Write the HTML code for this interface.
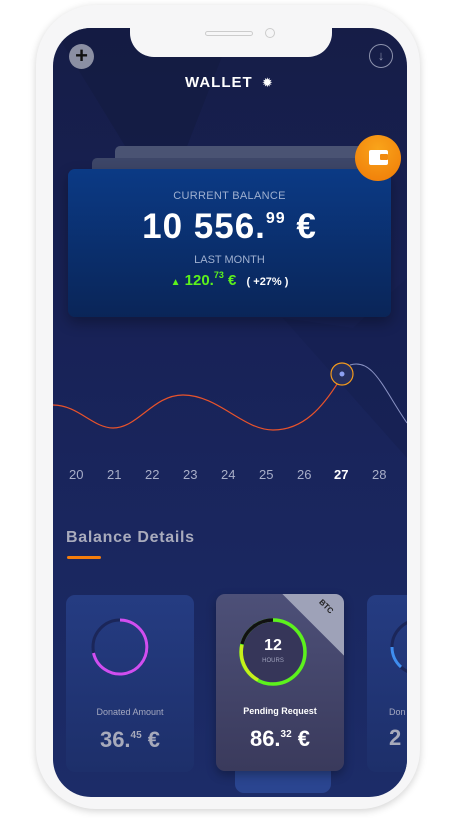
<!DOCTYPE html>
<html><head><meta charset="utf-8"><style>
*{margin:0;padding:0;box-sizing:border-box}
body{width:458px;height:818px;background:#fff;position:relative;overflow:hidden;font-family:"Liberation Sans","DejaVu Sans",sans-serif}
.phone{position:absolute;left:36px;top:5px;width:384px;height:804px;border-radius:60px;background:#f6f6f7;box-shadow:0 2px 8px rgba(0,0,0,.18)}
.screen{position:absolute;left:53px;top:28px;width:354px;height:769px;border-radius:38px;overflow:hidden;background:linear-gradient(180deg,#161d47 0%,#182257 40%,#1c2c68 100%)}
.notch{position:absolute;left:130px;top:20px;width:202px;height:37px;background:#f6f6f7;border-radius:0 0 24px 24px}
.abs{position:absolute}
.w{color:#fff}
</style></head><body>
<div class="phone"></div>
<div class="screen">
<svg class="abs" style="left:0;top:0" width="354" height="769">
<polygon points="0,0 180,0 110,180" fill="#141b42" opacity=".7"/>
<polygon points="230,290 354,430 354,250 300,300" fill="#162050" opacity=".6"/>
<path d="M0,377 C25,377 40,400 60,400 C85,400 100,367 130,367 C165,367 190,402 220,402 C250,402 270,380 289,348" fill="none" stroke="#e8532b" stroke-width="1.2"/>
<path d="M297,337 C320,330 330,360 354,395" fill="none" stroke="#8a93c4" stroke-width="1"/>
<circle cx="289" cy="346" r="11" fill="#262f5e" stroke="#f39a1c" stroke-width="1.2"/>
<circle cx="289" cy="346" r="2.5" fill="#8da0f0"/>
</svg>
<div class="abs" style="left:16px;top:16px;width:25px;height:25px;border-radius:50%;background:#8b8fa3;color:#111;font-size:22px;line-height:24px;text-align:center;font-weight:bold">+</div>
<div class="abs" style="left:316px;top:16px;width:24px;height:24px;border-radius:50%;border:1px solid #8d93ad;color:#8d93ad;font-size:13px;line-height:22px;text-align:center">↓</div>
<div class="abs w" style="left:132px;top:46px;font-size:15px;font-weight:bold;letter-spacing:1px">WALLET <span style="font-size:13px;margin-left:4px">✹</span></div>
<div class="abs" style="left:62px;top:118px;width:250px;height:40px;background:#4a5373;border-radius:5px"></div>
<div class="abs" style="left:39px;top:130px;width:270px;height:40px;background:#3d4668;border-radius:5px"></div>
<div class="abs" style="left:15px;top:141px;width:323px;height:148px;border-radius:7px;background:linear-gradient(180deg,#0b3a85,#0a2558);box-shadow:0 6px 14px rgba(0,0,0,.3);text-align:center">
<div style="margin-top:21px;font-size:11px;color:#9fb0d0;letter-spacing:.3px">CURRENT BALANCE</div>
<div class="w" style="margin-top:5px;font-size:35px;font-weight:bold;letter-spacing:1px">10 556.<sup style="font-size:16px;vertical-align:15px">99</sup> €</div>
<div style="margin-top:7px;font-size:11px;color:#9fb0d0">LAST MONTH</div>
<div style="margin-top:4px;font-size:15px;font-weight:bold;color:#5cf21c"><span style="font-size:10px">▲</span> 120.<sup style="font-size:9px;vertical-align:7px">73</sup> € <span style="color:#fff;font-size:11px;margin-left:6px">( +27% )</span></div>
</div>
<div class="abs" style="left:302px;top:107px;width:46px;height:46px;border-radius:50%;background:radial-gradient(circle at 50% 30%,#f9a41a,#ef7a07)"></div>
<div class="abs" style="left:316px;top:122px;width:19px;height:15px;background:#fff;border-radius:2px"></div>
<div class="abs" style="left:327px;top:126px;width:8px;height:6px;background:#f08a10;border-radius:1px"></div>
<div class="abs" style="left:0;top:439px;width:354px;font-size:13px;color:#a8aec8">
<span class="abs" style="left:16px">20</span><span class="abs" style="left:54px">21</span><span class="abs" style="left:92px">22</span><span class="abs" style="left:130px">23</span><span class="abs" style="left:168px">24</span><span class="abs" style="left:206px">25</span><span class="abs" style="left:244px">26</span><span class="abs" style="left:281px;color:#fff;font-weight:bold">27</span><span class="abs" style="left:319px">28</span></div>
<div class="abs" style="left:13px;top:501px;font-size:16px;font-weight:bold;color:#a9abbc;letter-spacing:.7px">Balance Details</div>
<div class="abs" style="left:14px;top:528px;width:34px;height:3px;background:#f47d0c;border-radius:2px"></div>
<div class="abs" style="left:13px;top:567px;width:128px;height:177px;border-radius:9px;background:linear-gradient(180deg,#253c82,#1d2f6a);text-align:center">
<svg class="abs" style="left:24px;top:22px" width="60" height="60"><circle cx="30" cy="30" r="27" fill="none" stroke="#1b2659" stroke-width="3"/><path d="M30,3 A27,27 0 1 1 3.5,36" fill="none" stroke="#d04ef0" stroke-width="3"/></svg>
<div style="margin-top:112px;font-size:9px;color:#a4a8c0">Donated Amount</div>
<div style="margin-top:10px;font-size:22px;font-weight:bold;color:#a7aabb">36.<sup style="font-size:10px;vertical-align:9px">45</sup> €</div></div>
<div class="abs" style="left:182px;top:735px;width:96px;height:30px;border-radius:9px;background:#2a4590"></div>
<div class="abs" style="left:163px;top:566px;width:128px;height:177px;border-radius:9px;overflow:hidden;background:linear-gradient(180deg,#4d5078,#3a3a5c);text-align:center;box-shadow:0 4px 10px rgba(0,0,0,.3)">
<div class="abs" style="left:85px;top:-45px;width:90px;height:90px;background:#9ea2b8;transform:rotate(45deg)"></div>
<div class="abs" style="left:102px;top:8px;font-size:8px;font-weight:bold;color:#222;transform:rotate(45deg)">BTC</div>
<svg class="abs" style="left:22px;top:23px" width="70" height="70"><circle cx="35" cy="35" r="30" fill="#363659"/><circle cx="35" cy="35" r="32" fill="none" stroke="#5cf21c" stroke-width="3.5"/><path d="M35,3 A32,32 0 0 0 4,27" fill="none" stroke="#111" stroke-width="3.5"/><path d="M4,28 A32,32 0 0 0 20,63" fill="none" stroke="#c6f01a" stroke-width="3.5"/></svg>
<div class="abs w" style="left:0;width:114px;top:43px;font-size:16px;font-weight:bold">12</div>
<div class="abs" style="left:0;width:114px;top:64px;font-size:6px;color:#a0a3bd">HOURS</div>
<div class="w" style="margin-top:112px;font-size:9px;font-weight:bold">Pending Request</div>
<div class="w" style="margin-top:10px;font-size:22px;font-weight:bold">86.<sup style="font-size:10px;vertical-align:9px">32</sup> €</div></div>
<div class="abs" style="left:314px;top:567px;width:60px;height:177px;border-radius:9px;background:linear-gradient(180deg,#253c82,#1d2f6a)">
<svg class="abs" style="left:22px;top:22px" width="40" height="60"><circle cx="30" cy="30" r="27" fill="none" stroke="#1b2659" stroke-width="3"/><path d="M3,30 A27,27 0 0 0 12,50" fill="none" stroke="#3f8ef0" stroke-width="3"/></svg>
<div class="abs" style="left:22px;top:112px;font-size:9px;color:#a4a8c0">Don</div>
<div class="abs" style="left:22px;top:130px;font-size:22px;font-weight:bold;color:#a7aabb">2</div></div>
</div>
<div class="notch"></div>
<div class="abs" style="left:205px;top:31px;width:48px;height:5px;border:1px solid #ccc;border-radius:3px"></div>
<div class="abs" style="left:265px;top:28px;width:10px;height:10px;border:1px solid #ccc;border-radius:50%"></div>
</body></html>
